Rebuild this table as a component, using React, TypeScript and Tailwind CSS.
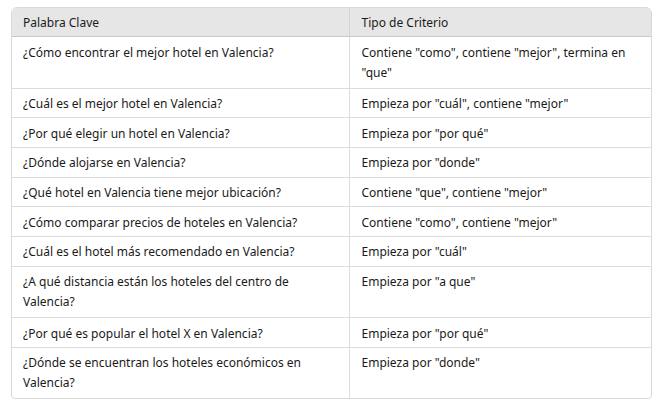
import React from "react";

const rows: [string, string, boolean?][] = [
  ["¿Cómo encontrar el mejor hotel en Valencia?", 'Contiene "como", contiene "mejor", termina en "que"', true],
  ["¿Cuál es el mejor hotel en Valencia?", 'Empieza por "cuál", contiene "mejor"'],
  ["¿Por qué elegir un hotel en Valencia?", 'Empieza por "por qué"'],
  ["¿Dónde alojarse en Valencia?", 'Empieza por "donde"'],
  ["¿Qué hotel en Valencia tiene mejor ubicación?", 'Contiene "que", contiene "mejor"'],
  ["¿Cómo comparar precios de hoteles en Valencia?", 'Contiene "como", contiene "mejor"'],
  ["¿Cuál es el hotel más recomendado en Valencia?", 'Empieza por "cuál"'],
  ["¿A qué distancia están los hoteles del centro de Valencia?", 'Empieza por "a que"', true],
  ["¿Por qué es popular el hotel X en Valencia?", 'Empieza por "por qué"'],
  ["¿Dónde se encuentran los hoteles económicos en Valencia?", 'Empieza por "donde"', true],
];

export default function App() {
  return (
    <div className="bg-white w-[659px] h-[406px] pt-[7px] pl-[11px]" style={{ fontFamily: '"Noto Sans", "Open Sans", sans-serif' }}>
      <div className="w-[641px] border border-[#d9d9d9] rounded-t-[6px] rounded-b-[4px] overflow-hidden text-[12px] leading-[20px] text-[#1a1a1a]">
        <table className="w-full border-collapse table-fixed">
          <colgroup>
            <col className="w-[337px]" />
            <col />
          </colgroup>
          <thead>
            <tr className="bg-[#e6e6e6] border-b border-[#c8c8c8]">
              <th className="text-left font-normal px-[11px] pt-[5px] pb-[3px] h-[28px] border-r border-[#d4d4d4]">Palabra Clave</th>
              <th className="text-left font-normal px-[12px] pt-[5px] pb-[3px]">Tipo de Criterio</th>
            </tr>
          </thead>
          <tbody>
            {rows.map(([a, b, tall], i) => (
              <tr key={i} className={i < rows.length - 1 ? "border-b border-[#dcdcdc]" : ""}>
                <td className={`align-top px-[11px] pt-[5.5px] border-r border-[#dcdcdc] ${tall ? "pb-[5px]" : "pb-[3.2px]"}`}>{a}</td>
                <td className={`align-top px-[12px] pt-[5.5px] ${tall ? "pb-[5px]" : "pb-[3.2px]"}`}>{b}</td>
              </tr>
            ))}
          </tbody>
        </table>
      </div>
    </div>
  );
}
